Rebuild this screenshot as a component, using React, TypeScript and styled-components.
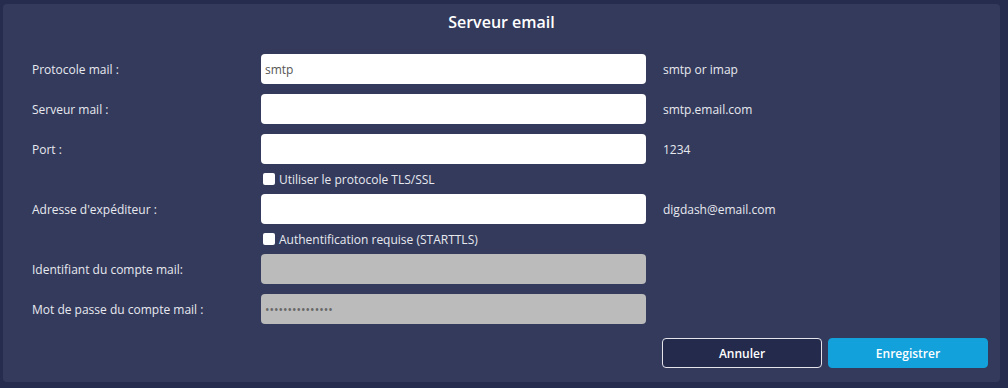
import React from 'react';
import styled, { createGlobalStyle } from 'styled-components';

const GlobalStyle = createGlobalStyle`
  html, body {
    margin: 0;
    padding: 0;
    background-color: #252c4e;
  }

  body {
    font-family: "Open Sans", "Noto Sans", sans-serif;
  }
`;

const Page = styled.div`
  box-sizing: border-box;
  height: 388px;
  padding: 4px 8px 6px 3px;
  width: 1008px;
`;

const Panel = styled.div`
  background-color: #333a5c;
  border-radius: 4px;
  box-sizing: border-box;
  display: flex;
  flex-direction: column;
  height: 378px;
  padding: 0 12px 14px 29px;
`;

const Title = styled.h1`
  color: #ffffff;
  font-size: 16px;
  font-weight: 600;
  line-height: 36px;
  margin: 0 0 0 -17px;
  text-align: center;
`;

const Form = styled.div`
  display: flex;
  flex-direction: column;
  padding-top: 4px;
`;

const FieldRow = styled.div`
  align-items: center;
  display: grid;
  grid-template-columns: 212px 385px auto;
  column-gap: 17px;
  height: 30px;
  margin-top: 10px;
`;

const Label = styled.label`
  color: #e8e9ef;
  font-size: 12px;
`;

const Hint = styled.span`
  color: #e8e9ef;
  font-size: 12px;
`;

const Input = styled.input<{ $disabled?: boolean }>`
  background-color: ${(props) => (props.$disabled ? '#bbbbbb' : '#ffffff')};
  border: none;
  border-radius: 4px;
  box-sizing: border-box;
  color: #555555;
  font-family: "Open Sans", "Noto Sans", sans-serif;
  font-size: 12px;
  height: 30px;
  outline: none;
  padding: 0 4px;
  width: 100%;

  &::placeholder {
    color: #666666;
  }
`;

const CheckRow = styled.div`
  align-items: center;
  display: flex;
  gap: 4px;
  height: 30px;
  margin-bottom: -10px;
  padding-left: 231px;
`;

const Checkbox = styled.span`
  background-color: #ffffff;
  border-radius: 2px;
  display: inline-block;
  height: 12px;
  width: 12px;
`;

const CheckLabel = styled.span`
  color: #e8e9ef;
  font-size: 12px;
`;

const Actions = styled.div`
  display: flex;
  gap: 6px;
  justify-content: flex-end;
  margin-top: auto;
`;

const Button = styled.button<{ $primary?: boolean }>`
  background-color: ${(props) => (props.$primary ? '#12a1db' : '#232a4c')};
  border: 1px solid ${(props) => (props.$primary ? '#12a1db' : '#e4e4ea')};
  border-radius: 4px;
  box-sizing: border-box;
  color: #ffffff;
  font-family: "Open Sans", "Noto Sans", sans-serif;
  font-size: 12px;
  font-weight: 600;
  height: 30px;
  width: 160px;
`;

interface Field {
  label: string;
  value: string;
  hint: string;
  check?: string;
  disabled?: boolean;
  password?: boolean;
}

const fields: Field[] = [
  { label: 'Protocole mail :', value: 'smtp', hint: 'smtp or imap' },
  { label: 'Serveur mail :', value: '', hint: 'smtp.email.com' },
  { label: 'Port :', value: '', hint: '1234', check: 'Utiliser le protocole TLS/SSL' },
  { label: "Adresse d'expéditeur :", value: '', hint: 'digdash@email.com', check: 'Authentification requise (STARTTLS)' },
  { label: 'Identifiant du compte mail:', value: '', hint: '', disabled: true },
  { label: 'Mot de passe du compte mail :', value: '', hint: '', disabled: true, password: true },
];

export default function App() {
  return (
    <Page>
      <GlobalStyle />
      <Panel>
        <Title>Serveur email</Title>
        <Form>
          {fields.map((field) => (
            <React.Fragment key={field.label}>
              <FieldRow>
                <Label>{field.label}</Label>
                <Input
                  $disabled={field.disabled}
                  readOnly
                  value={field.value}
                  placeholder={field.password ? '•••••••••••••••' : ''}
                  type={field.password ? 'password' : 'text'}
                />
                <Hint>{field.hint}</Hint>
              </FieldRow>
              {field.check && (
                <CheckRow>
                  <Checkbox />
                  <CheckLabel>{field.check}</CheckLabel>
                </CheckRow>
              )}
            </React.Fragment>
          ))}
        </Form>
        <Actions>
          <Button type="button">Annuler</Button>
          <Button type="button" $primary>Enregistrer</Button>
        </Actions>
      </Panel>
    </Page>
  );
}
